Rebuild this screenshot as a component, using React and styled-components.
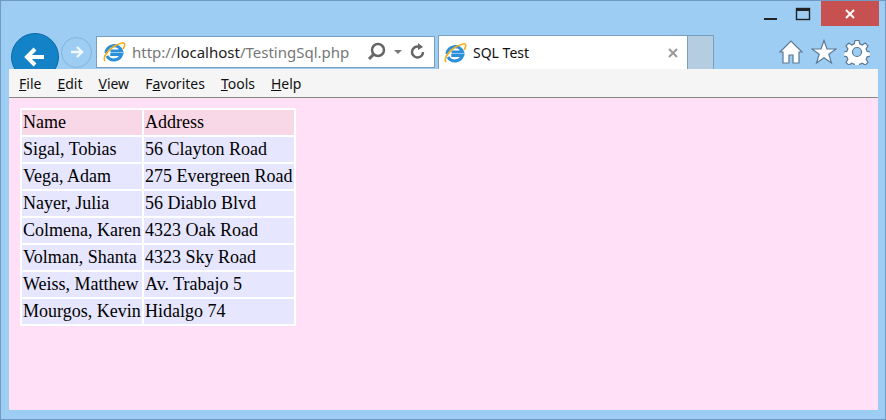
import React from 'react';
import styled, { createGlobalStyle } from 'styled-components';

const Global = createGlobalStyle`
  html, body { margin: 0; padding: 0; }
  body { font-family: "Segoe UI", "Noto Sans", "Liberation Sans", sans-serif; }
`;

const rows = [
  ['Sigal, Tobias', '56 Clayton Road'],
  ['Vega, Adam', '275 Evergreen Road'],
  ['Nayer, Julia', '56 Diablo Blvd'],
  ['Colmena, Karen', '4323 Oak Road'],
  ['Volman, Shanta', '4323 Sky Road'],
  ['Weiss, Matthew', 'Av. Trabajo 5'],
  ['Mourgos, Kevin', 'Hidalgo 74'],
];

const App = () => (
  <>
    <Global />
    <Window>
      <TitleBar>
        <WinBtn>
          <svg width="16" height="16"><rect x="2" y="12" width="13" height="2" fill="#222" /></svg>
        </WinBtn>
        <WinBtn>
          <svg width="16" height="16"><rect x="1.5" y="2.5" width="13" height="11" fill="none" stroke="#222" strokeWidth="1.4" /><rect x="1.5" y="2.5" width="13" height="2.5" fill="#222" /></svg>
        </WinBtn>
        <CloseBtn>
          <svg width="14" height="14"><path d="M3 3 L11 11 M11 3 L3 11" stroke="#fff" strokeWidth="2" /></svg>
        </CloseBtn>
      </TitleBar>

      <NavRow>
        <BackBtn>
          <svg width="26" height="26" viewBox="0 0 26 26"><path d="M22 13 H6 M13 5 L5 13 L13 21" stroke="#fff" strokeWidth="4" fill="none" /></svg>
        </BackBtn>
        <FwdBtn>
          <svg width="18" height="18" viewBox="0 0 18 18"><path d="M3 9 H14 M9 4 L14 9 L9 14" stroke="#fff" strokeWidth="2.4" fill="none" /></svg>
        </FwdBtn>
        <AddressBar>
          <IeLogo />
          <Url>http://<b>localhost</b>/TestingSql.php</Url>
          <AddrIcons>
            <svg width="22" height="22" viewBox="0 0 22 22"><circle cx="12" cy="9" r="6" stroke="#666" strokeWidth="2.5" fill="none" /><path d="M8 13 L3 18" stroke="#666" strokeWidth="3" /></svg>
            <svg width="10" height="10"><path d="M1 3 L9 3 L5 7 Z" fill="#777" /></svg>
            <svg width="20" height="20" viewBox="0 0 20 20"><path d="M15 10 A5.5 5.5 0 1 1 11 4.7" stroke="#666" strokeWidth="2.5" fill="none" /><path d="M10 1 L15 5 L10 8 Z" fill="#666" /></svg>
          </AddrIcons>
        </AddressBar>
        <Tab>
          <IeLogo />
          <TabTitle>SQL Test</TabTitle>
          <svg width="12" height="12"><path d="M2 2 L10 10 M10 2 L2 10" stroke="#999" strokeWidth="2" /></svg>
        </Tab>
        <NewTab />
        <Tools>
          <svg width="26" height="26" viewBox="0 0 26 26"><path d="M2 13 L13 2 L24 13 L21 13 L21 24 L15 24 L15 16 L11 16 L11 24 L5 24 L5 13 Z" fill="#fff" stroke="#5a7a96" strokeWidth="1.2" /></svg>
          <svg width="26" height="26" viewBox="0 0 26 26"><path d="M13 1.5 L16 10 L25 10 L17.8 15.3 L20.5 24 L13 18.8 L5.5 24 L8.2 15.3 L1 10 L10 10 Z" fill="#fff" stroke="#5a7a96" strokeWidth="1.2" /></svg>
          <svg width="26" height="26" viewBox="0 0 26 26">
            <g fill="#fff" stroke="#5a7a96" strokeWidth="1.2">
              <path d="M11 1.5h4l.7 3.4 2.6 1.1 2.9-1.9 2.8 2.8-1.9 2.9 1.1 2.6 3.3.7v4l-3.3.7-1.1 2.6 1.9 2.9-2.8 2.8-2.9-1.9-2.6 1.1-.7 3.4h-4l-.7-3.4-2.6-1.1-2.9 1.9-2.8-2.8 1.9-2.9-1.1-2.6-3.3-.7v-4l3.3-.7 1.1-2.6-1.9-2.9 2.8-2.8 2.9 1.9 2.6-1.1z" />
              <circle cx="13" cy="13" r="4.5" fill="#9dcdf3" />
            </g>
          </svg>
        </Tools>
      </NavRow>

      <MenuBar>
        {['File', 'Edit', 'View', 'Favorites', 'Tools', 'Help'].map((m) => (
          <MenuItem key={m}>{m === 'Favorites' ? <>F<u>a</u>vorites</> : <><u>{m[0]}</u>{m.slice(1)}</>}</MenuItem>
        ))}
      </MenuBar>

      <Content>
        <Table>
          <thead>
            <tr><Th>Name</Th><Th>Address</Th></tr>
          </thead>
          <tbody>
            {rows.map(([n, a]) => (
              <tr key={n}><Td>{n}</Td><Td>{a}</Td></tr>
            ))}
          </tbody>
        </Table>
      </Content>
    </Window>
  </>
);

const IeLogo = () => (
  <svg width="24" height="24" viewBox="0 0 24 24">
    <path d="M4 13 A8 8 0 0 1 19.5 11 H8.5 M8.3 14.5 H19.5 A8 8 0 0 1 5 16" stroke="#2b8fd9" strokeWidth="3.2" fill="none" />
    <path d="M3 21 C0 17 8 6 20 3 C24 2 23 6 21 9" stroke="#f2b01e" strokeWidth="1.6" fill="none" />
  </svg>
);

export default App;

const Window = styled.div`
  width: 886px;
  height: 420px;
  box-sizing: border-box;
  background: #9ecdf4;
  border: 1px solid #6e9ac4;
  display: flex;
  flex-direction: column;
  padding: 0 7px 9px 8px;
`;

const TitleBar = styled.div`
  height: 34px;
  display: flex;
  justify-content: flex-end;
  align-items: flex-start;
  margin-right: -1px;
`;

const WinBtn = styled.div`
  width: 33px;
  height: 26px;
  display: flex;
  align-items: center;
  justify-content: center;
`;

const CloseBtn = styled.div`
  width: 58px;
  height: 25px;
  margin-left: 2px;
  background: #c75050;
  display: flex;
  align-items: center;
  justify-content: center;
`;

const NavRow = styled.div`
  height: 34px;
  display: flex;
  align-items: center;
`;

const BackBtn = styled.div`
  width: 46px;
  height: 46px;
  border-radius: 50%;
  background: #1382c6;
  border: 1px solid #0b6ba6;
  display: flex;
  align-items: center;
  justify-content: center;
  margin: 10px 0 0 2px;
  flex-shrink: 0;
`;

const FwdBtn = styled.div`
  width: 29px;
  height: 29px;
  border-radius: 50%;
  border: 1.5px solid #7fb0d9;
  display: flex;
  align-items: center;
  justify-content: center;
  margin: 0 4px 0 2px;
  opacity: 0.85;
  flex-shrink: 0;
`;

const AddressBar = styled.div`
  width: 339px;
  height: 32px;
  box-sizing: border-box;
  background: #fff;
  border: 1px solid #7a9ebe;
  display: flex;
  align-items: center;
  padding: 0 6px 0 5px;
  gap: 6px;
  align-self: flex-start;
  margin-top: 1px;
`;

const Url = styled.div`
  flex: 1;
  font-size: 15px;
  color: #777;
  b { color: #222; font-weight: normal; }
`;

const AddrIcons = styled.div`
  display: flex;
  align-items: center;
  gap: 5px;
`;

const Tab = styled.div`
  width: 250px;
  height: 34px;
  box-sizing: border-box;
  margin-left: 3px;
  background: #fff;
  border: 1px solid #7a9ebe;
  border-bottom: none;
  display: flex;
  align-items: center;
  padding: 0 8px 0 4px;
  gap: 6px;
  align-self: flex-end;
`;

const TabTitle = styled.div`
  flex: 1;
  font-size: 14px;
  color: #111;
`;

const NewTab = styled.div`
  width: 26px;
  height: 34px;
  box-sizing: border-box;
  background: #b4cde0;
  border: 1px solid #7a9ebe;
  border-left: none;
  border-bottom: none;
  align-self: flex-end;
`;

const Tools = styled.div`
  margin-left: auto;
  display: flex;
  gap: 7px;
  margin-right: 8px;
`;

const MenuBar = styled.div`
  height: 28px;
  background: #f5f5f5;
  border-bottom: 1px solid #888;
  display: flex;
  align-items: center;
  padding-left: 10px;
  gap: 16px;
`;

const MenuItem = styled.span`
  font-size: 14px;
  color: #111;
`;

const Content = styled.div`
  flex: 1;
  background: #ffe0f6;
  padding: 10px 11px;
`;

const Table = styled.table`
  background: #fff;
  border-spacing: 2px;
  font-family: "Liberation Serif", "Times New Roman", serif;
  font-size: 18px;
  color: #000;
`;

const Th = styled.th`
  background: #f8d8e6;
  font-weight: normal;
  text-align: left;
  padding: 1px 1px;
  height: 23px;
`;

const Td = styled.td`
  background: #e6e6fe;
  padding: 1px 1px;
  height: 23px;
`;
